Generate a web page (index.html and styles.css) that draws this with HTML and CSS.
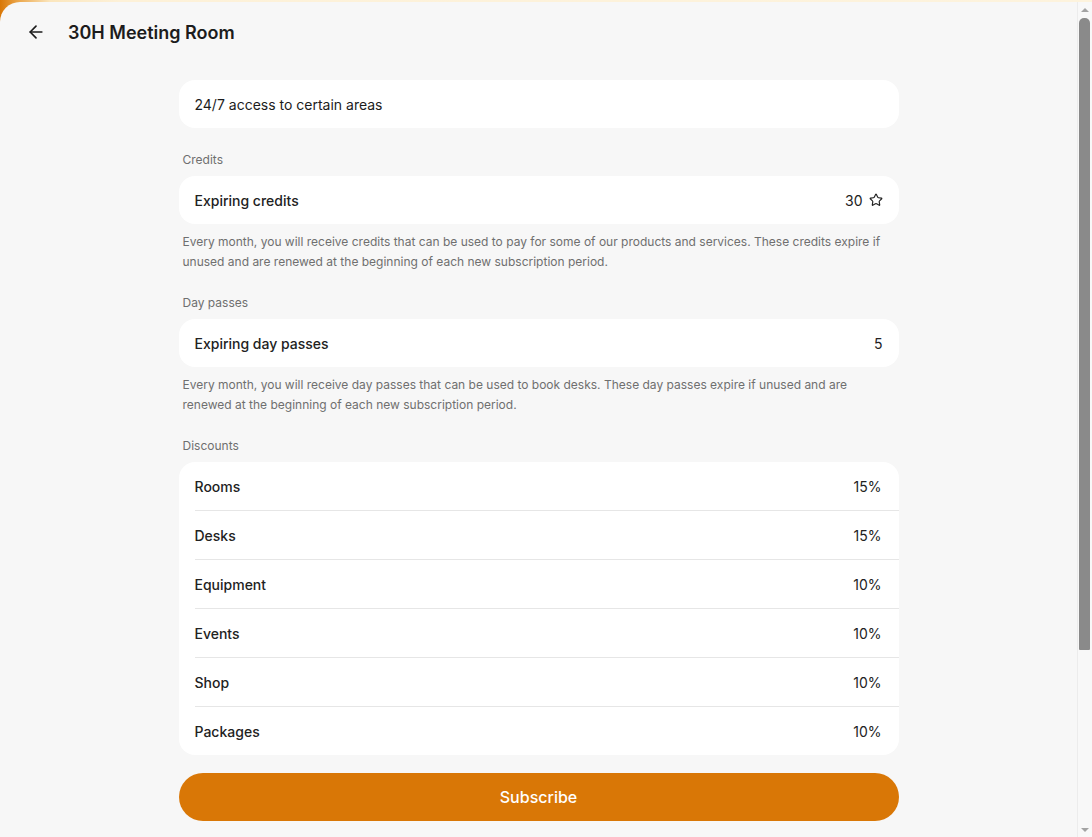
FILE: index.html
```html
<!DOCTYPE html>
<html lang="en">
<head>
<meta charset="utf-8">
<title>30H Meeting Room</title>
<link rel="stylesheet" href="styles.css">
</head>
<body>
<div class="frame">
  <div class="panel">
    <div class="scroller">
      <header class="topbar">
        <button class="back" aria-label="Back">
          <svg width="20" height="20" viewBox="0 0 24 24" fill="none" stroke="currentColor" stroke-width="2" stroke-linecap="round" stroke-linejoin="round"><path d="m12 19-7-7 7-7"/><path d="M19 12H5"/></svg>
        </button>
        <h1 class="title">30H Meeting Room</h1>
      </header>
      <main class="content">
        <div class="card single"><span class="plain">24/7 access to certain areas</span></div>

        <section class="section">
          <div class="label">Credits</div>
          <div class="card row"><span class="name">Expiring credits</span><span class="value">30
            <svg class="star" width="14" height="14" viewBox="0 0 24 24" fill="none" stroke="currentColor" stroke-width="2" stroke-linecap="round" stroke-linejoin="round"><path d="M11.525 2.295a.53.53 0 0 1 .95 0l2.31 4.679a2.123 2.123 0 0 0 1.595 1.16l5.166.756a.53.53 0 0 1 .294.904l-3.736 3.638a2.123 2.123 0 0 0-.611 1.878l.882 5.14a.53.53 0 0 1-.771.56l-4.618-2.428a2.122 2.122 0 0 0-1.973 0L6.396 21.01a.53.53 0 0 1-.77-.56l.881-5.139a2.122 2.122 0 0 0-.611-1.879L2.16 9.795a.53.53 0 0 1 .294-.906l5.165-.755a2.122 2.122 0 0 0 1.597-1.160z"/></svg></span></div>
          <p class="desc">Every month, you will receive credits that can be used to pay for some of our products and services. These credits expire if unused and are renewed at the beginning of each new subscription period.</p>
        </section>

        <section class="section">
          <div class="label">Day passes</div>
          <div class="card row"><span class="name">Expiring day passes</span><span class="value">5</span></div>
          <p class="desc">Every month, you will receive day passes that can be used to book desks. These day passes expire if unused and are renewed at the beginning of each new subscription period.</p>
        </section>

        <section class="section">
          <div class="label">Discounts</div>
          <div class="card list">
            <div class="item"><span class="name">Rooms</span><span class="value">15%</span></div>
            <div class="item"><span class="name">Desks</span><span class="value">15%</span></div>
            <div class="item"><span class="name">Equipment</span><span class="value">10%</span></div>
            <div class="item"><span class="name">Events</span><span class="value">10%</span></div>
            <div class="item"><span class="name">Shop</span><span class="value">10%</span></div>
            <div class="item"><span class="name">Packages</span><span class="value">10%</span></div>
          </div>
        </section>

        <button class="subscribe">Subscribe</button>
        <div class="spacer"></div>
      </main>
    </div>
    <div class="scrollbar" aria-hidden="true">
      <div class="arrow up"></div>
      <div class="track"><div class="thumb"></div></div>
      <div class="arrow down"></div>
    </div>
  </div>
</div>
</body>
</html>
```

FILE: styles.css
```css
* { box-sizing: border-box; }
html, body { margin: 0; height: 100%; }
body {
  font-family: Inter, "Noto Sans", sans-serif;
  color: #1c1c1c;
  background: linear-gradient(90deg, #d97706 0px, #eba64a 18px, #fbe6bd 50px, #fdf1d8 120px, #fdf3dd 100%);
  overflow: hidden;
}
.frame { height: 100%; padding-top: 2px; }
.panel {
  height: 835px;
  background: #f7f7f7;
  border-top-left-radius: 20px;
  display: flex;
  overflow: hidden;
}
.scroller {
  flex: 1;
  min-width: 0;
  overflow: hidden;
}
.scrollbar {
  width: 15px;
  flex: none;
  display: flex;
  flex-direction: column;
  background: #f8f8f8;
  border-left: 1px solid #ececec;
}
.arrow {
  height: 15px;
  display: flex;
  align-items: center;
  justify-content: center;
}
.arrow::before {
  content: "";
  width: 0;
  height: 0;
  border-left: 4px solid transparent;
  border-right: 4px solid transparent;
}
.arrow.up::before { border-bottom: 4px solid #a3a3a3; }
.arrow.down::before { border-top: 4px solid #a3a3a3; }
.track {
  flex: 1;
  padding: 1px 2px 0 1px;
}
.thumb {
  height: 632px;
  background: #8a8a8a;
  border-radius: 5px 5px 1px 1px;
}
.topbar {
  display: flex;
  align-items: center;
  height: 60px;
  padding-left: 26px;
  gap: 22px;
}
.back {
  border: 0;
  background: none;
  padding: 0;
  width: 20px;
  height: 20px;
  color: #1c1c1c;
  display: flex;
}
.title {
  margin: 0;
  font-size: 18px;
  font-weight: 600;
}
.content {
  width: 720px;
  margin: 0 auto;
  padding-top: 18px;
}
.card {
  background: #fff;
  border-radius: 16px;
}
.single, .row {
  height: 48px;
  display: flex;
  align-items: center;
  padding: 0 16px;
  font-size: 14px;
}
.row { justify-content: space-between; }
.name { font-weight: 500; font-size: 14px; color: #222; }
.value { font-size: 14px; display: flex; align-items: center; gap: 6px; color: #222; }
.section { margin-top: 24px; }
.section + .section { margin-top: 23px; }
.label {
  font-size: 12px;
  line-height: 16px;
  color: #6f6f6f;
  padding: 0 4px;
  margin-bottom: 8px;
}
.desc {
  margin: 8px 0 0;
  padding: 0 4px;
  font-size: 12px;
  line-height: 20px;
  color: #6f6f6f;
}
.list { padding-left: 16px; }
.item {
  display: flex;
  justify-content: space-between;
  align-items: center;
  height: 49px;
  padding-right: 17px;
  border-bottom: 1px solid #e6e6e6;
}
.item:last-child { border-bottom: 0; height: 48px; }
.subscribe {
  display: block;
  width: 100%;
  height: 48px;
  margin-top: 18px;
  border: 0;
  border-radius: 24px;
  background: #d97706;
  color: #fff;
  font-family: inherit;
  font-size: 16px;
  font-weight: 500;
}
.spacer { height: 220px; }
```
